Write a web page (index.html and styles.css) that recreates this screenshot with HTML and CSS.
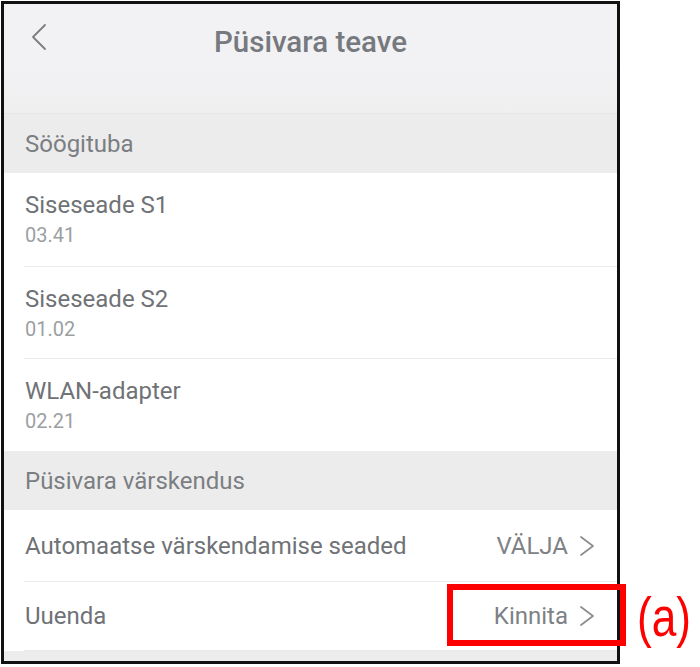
FILE: index.html
```html
<!DOCTYPE html>
<html lang="et">
<head>
<meta charset="utf-8">
<title>Püsivara teave</title>
<link rel="stylesheet" href="styles.css">
</head>
<body>
<div class="canvas">
  <div class="phone">
    <header class="topbar">
      <div class="back">
        <svg width="16" height="28" viewBox="0 0 16 28"><path d="M14 2 L2 14 L14 26" fill="none" stroke="#7b7e82" stroke-width="1.8" stroke-linecap="round" stroke-linejoin="round"/></svg>
      </div>
      <h1 class="title">Püsivara teave</h1>
      <div></div>
    </header>
    <div class="section">Söögituba</div>
    <div class="row double first">
      <div class="row-inner">
        <div class="name">Siseseade S1</div>
        <div class="ver">03.41</div>
      </div>
    </div>
    <div class="row double">
      <div class="row-inner">
        <div class="name">Siseseade S2</div>
        <div class="ver">01.02</div>
      </div>
    </div>
    <div class="row double">
      <div class="row-inner last">
        <div class="name">WLAN-adapter</div>
        <div class="ver">02.21</div>
      </div>
    </div>
    <div class="section">Püsivara värskendus</div>
    <div class="row single">
      <div class="row-inner line">
        <div class="name">Automaatse värskendamise seaded</div>
        <div class="value">VÄLJA
          <svg class="chev" width="16" height="22" viewBox="0 0 16 22"><path d="M2 2 L14 11 L2 20" fill="none" stroke="#8a8d90" stroke-width="1.7" stroke-linecap="round" stroke-linejoin="round"/></svg>
        </div>
      </div>
    </div>
    <div class="row single second">
      <div class="row-inner">
        <div class="name">Uuenda</div>
        <div class="value">Kinnita
          <svg class="chev" width="16" height="22" viewBox="0 0 16 22"><path d="M2 2 L14 11 L2 20" fill="none" stroke="#8a8d90" stroke-width="1.7" stroke-linecap="round" stroke-linejoin="round"/></svg>
        </div>
      </div>
    </div>
    <div class="filler"></div>
  </div>
  <div class="mark-box"></div>
  <div class="mark-label">(a)</div>
</div>
</body>
</html>
```
FILE: styles.css
```css
* { box-sizing: border-box; }
html, body { margin: 0; padding: 0; background: #ffffff; }
body { font-family: Roboto, "Noto Sans", sans-serif; }

.canvas {
  position: relative;
  width: 700px;
  height: 667px;
  padding: 1px 0 0 1px;
}

.phone {
  width: 619px;
  height: 663px;
  border: 3px solid #111111;
  background: #ececec;
  display: flex;
  flex-direction: column;
  overflow: hidden;
}

.topbar {
  height: 110px;
  flex: none;
  display: grid;
  grid-template-columns: 60px 1fr 60px;
  align-items: start;
  padding-top: 18px;
  background: linear-gradient(#f2f2f4 0%, #f2f2f4 55%, #efeff0 100%);
  border-bottom: 1px solid #e6e6e8;
}

.back {
  padding: 1px 0 0 27px;
  height: 40px;
}

.title {
  margin: 0;
  text-align: center;
  font-size: 29.5px;
  line-height: 40px;
  font-weight: 500;
  color: #76797d;
}

.section {
  height: 59px;
  flex: none;
  display: flex;
  align-items: center;
  padding-left: 21px;
  font-size: 24px;
  color: #7b7e82;
  background: #ececec;
}

.row {
  background: #ffffff;
  flex: none;
  padding-left: 20px;
}

.row-inner {
  height: 100%;
  border-bottom: 1px solid #e9e9eb;
}
.row-inner.last { border-bottom: none; }

.double { height: 92px; }
.double.first { height: 94px; }
.double .row-inner { padding: 17px 0 0 1px; }

.name {
  font-size: 24px;
  line-height: 30px;
  color: #6f7276;
}

.ver {
  font-size: 20px;
  line-height: 30px;
  color: #9c9fa2;
}

.single { height: 72px; }
.single.second { height: 69px; }
.single .row-inner {
  display: flex;
  align-items: center;
  justify-content: space-between;
  padding: 0 22px 0 1px;
}

.value {
  display: flex;
  align-items: center;
  gap: 11px;
  font-size: 24px;
  color: #7e8185;
}

.chev { display: block; }

.filler { flex: 1; background: #ececec; }

.mark-box {
  position: absolute;
  left: 447px;
  top: 584px;
  width: 179px;
  height: 62px;
  border: 6px solid #ff0000;
}

.mark-label {
  position: absolute;
  left: 637px;
  top: 585px;
  font-family: "Liberation Sans", Arial, sans-serif;
  font-size: 56px;
  line-height: 64px;
  color: #ff0000;
  transform: scaleX(0.79);
  transform-origin: left top;
}
```
